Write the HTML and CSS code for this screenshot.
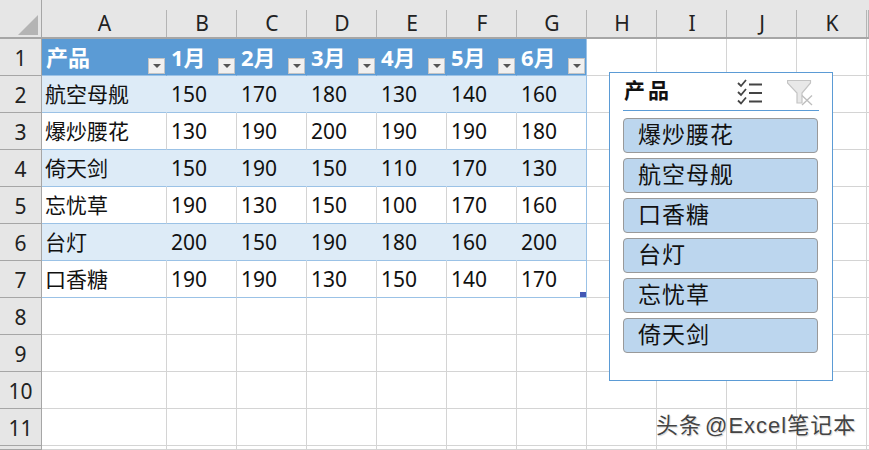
FILE: index.html
```html
<!DOCTYPE html>
<html lang="zh">
<head>
<meta charset="utf-8">
<title>产品</title>
<link rel="stylesheet" href="styles.css">
</head>
<body>
<div class="sheet">
  <div class="corner"><svg class="corner-tri" width="20" height="20" viewBox="0 0 20 20"><path d="M0 20H20V0Z" fill="#b4b4b4"/></svg></div>
  <div class="ch">A</div><div class="ch">B</div><div class="ch">C</div><div class="ch">D</div><div class="ch">E</div><div class="ch">F</div><div class="ch">G</div><div class="ch">H</div><div class="ch">I</div><div class="ch">J</div><div class="ch">K</div><div class="ch"></div>

  <div class="rh">1</div>
  <div class="c th">产品<i class="fb"></i></div><div class="c th">1月<i class="fb"></i></div><div class="c th">2月<i class="fb"></i></div><div class="c th">3月<i class="fb"></i></div><div class="c th">4月<i class="fb"></i></div><div class="c th">5月<i class="fb"></i></div><div class="c th end">6月<i class="fb"></i></div>
  <div class="c"></div><div class="c"></div><div class="c"></div><div class="c"></div><div class="c"></div>

  <div class="rh">2</div>
  <div class="c b name">航空母舰</div><div class="c b">150</div><div class="c b">170</div><div class="c b">180</div><div class="c b">130</div><div class="c b">140</div><div class="c b end">160</div>
  <div class="c"></div><div class="c"></div><div class="c"></div><div class="c"></div><div class="c"></div>

  <div class="rh">3</div>
  <div class="c w name">爆炒腰花</div><div class="c w">130</div><div class="c w">190</div><div class="c w">200</div><div class="c w">190</div><div class="c w">190</div><div class="c w end">180</div>
  <div class="c"></div><div class="c"></div><div class="c"></div><div class="c"></div><div class="c"></div>

  <div class="rh">4</div>
  <div class="c b name">倚天剑</div><div class="c b">150</div><div class="c b">190</div><div class="c b">150</div><div class="c b">110</div><div class="c b">170</div><div class="c b end">130</div>
  <div class="c"></div><div class="c"></div><div class="c"></div><div class="c"></div><div class="c"></div>

  <div class="rh">5</div>
  <div class="c w name">忘忧草</div><div class="c w">190</div><div class="c w">130</div><div class="c w">150</div><div class="c w">100</div><div class="c w">170</div><div class="c w end">160</div>
  <div class="c"></div><div class="c"></div><div class="c"></div><div class="c"></div><div class="c"></div>

  <div class="rh">6</div>
  <div class="c b name">台灯</div><div class="c b">200</div><div class="c b">150</div><div class="c b">190</div><div class="c b">180</div><div class="c b">160</div><div class="c b end">200</div>
  <div class="c"></div><div class="c"></div><div class="c"></div><div class="c"></div><div class="c"></div>

  <div class="rh">7</div>
  <div class="c w name">口香糖</div><div class="c w">190</div><div class="c w">190</div><div class="c w">130</div><div class="c w">150</div><div class="c w">140</div><div class="c w end">170<i class="handle"></i></div>
  <div class="c"></div><div class="c"></div><div class="c"></div><div class="c"></div><div class="c"></div>

  <div class="rh">8</div><div class="c"></div><div class="c"></div><div class="c"></div><div class="c"></div><div class="c"></div><div class="c"></div><div class="c"></div><div class="c"></div><div class="c"></div><div class="c"></div><div class="c"></div><div class="c"></div>
  <div class="rh">9</div><div class="c"></div><div class="c"></div><div class="c"></div><div class="c"></div><div class="c"></div><div class="c"></div><div class="c"></div><div class="c"></div><div class="c"></div><div class="c"></div><div class="c"></div><div class="c"></div>
  <div class="rh">10</div><div class="c"></div><div class="c"></div><div class="c"></div><div class="c"></div><div class="c"></div><div class="c"></div><div class="c"></div><div class="c"></div><div class="c"></div><div class="c"></div><div class="c"></div><div class="c"></div>
  <div class="rh">11</div><div class="c"></div><div class="c"></div><div class="c"></div><div class="c"></div><div class="c"></div><div class="c"></div><div class="c"></div><div class="c"></div><div class="c"></div><div class="c"></div><div class="c"></div><div class="c"></div>
  <div class="rh"></div><div class="c"></div><div class="c"></div><div class="c"></div><div class="c"></div><div class="c"></div><div class="c"></div><div class="c"></div><div class="c"></div><div class="c"></div><div class="c"></div><div class="c"></div><div class="c"></div>
</div>

<section class="slicer">
  <header class="sl-head">
    <span class="sl-title">产品</span>
    <svg class="ic-multi" width="26" height="26" viewBox="0 0 26 26" fill="none" stroke="#444" stroke-width="1.800">
      <path d="M1 4l3 3 5-6M1 13l3 3 5-6M1 21.500l3 3 5-6"/>
      <path d="M12 5.500H25M12 14H25M12 22.500H25"/>
    </svg>
    <svg class="ic-clear" width="26" height="26" viewBox="0 0 26 26" fill="none">
      <path d="M0.500 0.500H23.500V3L15 13V23H10V13L0.500 3Z" fill="#e8e8e8" stroke="#c4c4c4" stroke-width="1.200"/>
      <path d="M15 15.500L25 25M25 15.500L15 25" stroke="#bdbdbd" stroke-width="1.300"/>
    </svg>
  </header>
  <ul class="sl-list">
    <li class="sl-item">爆炒腰花</li>
    <li class="sl-item">航空母舰</li>
    <li class="sl-item">口香糖</li>
    <li class="sl-item">台灯</li>
    <li class="sl-item">忘忧草</li>
    <li class="sl-item">倚天剑</li>
  </ul>
</section>

<div class="mark">头条 @Excel笔记本</div>
</body>
</html>
```
FILE: styles.css
```css
html, body {
  margin: 0;
  padding: 0;
  background: #fff;
  width: 869px;
  height: 450px;
  overflow: hidden;
  font-family: "Noto Sans", "Noto Sans CJK SC", sans-serif;
  color: #111;
}

.sheet {
  display: grid;
  grid-template-columns: 42px 125px repeat(10, 70px) 2px;
  grid-template-rows: 39px repeat(11, 37px) 4px;
  width: 869px;
  height: 450px;
}

.corner {
  background: #e6e6e6;
  border-right: 1px solid #a6a6a6;
  border-bottom: 2px solid #a6a6a6;
  box-sizing: border-box;
  display: flex;
  align-items: flex-end;
  justify-content: flex-end;
  padding: 0 3px 2px 0;
}

.ch {
  background: #e6e6e6;
  border-bottom: 2px solid #a6a6a6;
  box-sizing: border-box;
  font-size: 21px;
  padding-top: 10px;
  line-height: 27px;
  text-align: center;
  color: #222;
  background-image: linear-gradient(#b4b4b4, #b4b4b4);
  background-repeat: no-repeat;
  background-size: 1px 27px;
  background-position: right 10px;
}

.rh {
  background: #e6e6e6;
  border-right: 1px solid #a6a6a6;
  border-bottom: 1px solid #a6a6a6;
  box-sizing: border-box;
  font-size: 21px;
  line-height: 38px;
  text-align: center;
  color: #222;
}

.c {
  border-right: 1px solid #d4d4d4;
  border-bottom: 1px solid #d4d4d4;
  box-sizing: border-box;
  position: relative;
  font-size: 21px;
  line-height: 36px;
  padding-left: 4px;
  white-space: nowrap;
}

.name {
  padding-left: 3px;
  line-height: 37px;
}

.th {
  background: #5b9bd5;
  border-right-color: #5b9bd5;
  border-bottom-color: #9bc2e6;
  color: #fff;
  font-size: 22px;
  font-weight: 700;
  line-height: 36px;
}

.b {
  background: #ddebf7;
  border-right-color: #ddebf7;
  border-bottom-color: #9bc2e6;
}

.w {
  border-bottom-color: #9bc2e6;
}

.end {
  border-right-color: #9bc2e6;
}

.fb {
  position: absolute;
  right: 1px;
  bottom: 1px;
  width: 17px;
  height: 16px;
  box-sizing: border-box;
  background: #f0f0f0;
  border: 1px solid #c4c4c4;
}

.fb::after {
  content: "";
  position: absolute;
  left: 4px;
  top: 5px;
  border-left: 4px solid transparent;
  border-right: 4px solid transparent;
  border-top: 4px solid #555;
}

.handle {
  position: absolute;
  right: 0;
  bottom: 0;
  width: 6px;
  height: 5px;
  background: #4358b5;
}

.slicer {
  position: absolute;
  left: 609px;
  top: 72px;
  width: 224px;
  height: 309px;
  box-sizing: border-box;
  background: #fff;
  border: 1px solid #5b9bd5;
  padding: 0 13px;
}

.sl-head {
  height: 38px;
  box-sizing: border-box;
  border-bottom: 1px solid #5b9bd5;
  display: flex;
  align-items: flex-start;
  position: relative;
}

.sl-title {
  font-size: 21px;
  font-weight: 700;
  letter-spacing: 3px;
  line-height: 35px;
  padding-left: 1px;
  color: #111;
}

.ic-multi {
  position: absolute;
  left: 114px;
  top: 6px;
}

.ic-clear {
  position: absolute;
  left: 164px;
  top: 7px;
}

.sl-list {
  list-style: none;
  margin: 7px 0 0;
  padding: 0;
  display: flex;
  flex-direction: column;
  gap: 5px;
}

.sl-item {
  width: 195px;
  height: 35px;
  box-sizing: border-box;
  background: #bcd6ee;
  border: 1px solid #999;
  border-radius: 4px;
  font-size: 23px;
  letter-spacing: 1px;
  line-height: 31px;
  padding-left: 14px;
  color: #111;
}

.mark {
  position: absolute;
  left: 656px;
  top: 410px;
  font-family: "Liberation Sans", "Noto Sans CJK SC", sans-serif;
  font-size: 22px;
  letter-spacing: 1px;
  word-spacing: -4px;
  line-height: 32px;
  color: #444;
  text-shadow: 0 0 2px #fff, 1px 1px 1px #ccc;
  white-space: nowrap;
}
```
